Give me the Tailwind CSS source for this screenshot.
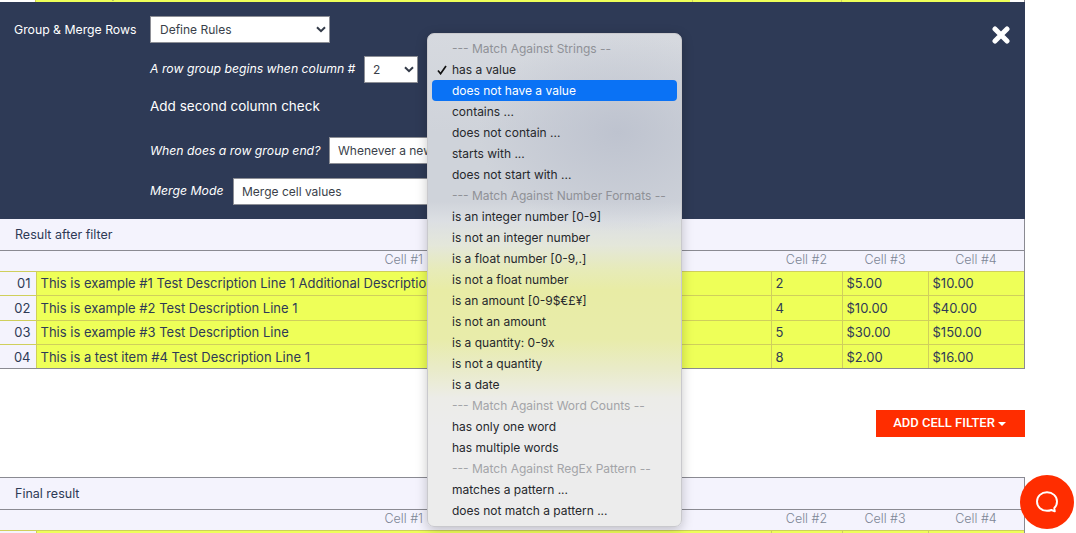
<!DOCTYPE html>
<html lang="en">
<head>
<meta charset="utf-8">
<title>Group & Merge Rows</title>
<script src="https://cdn.jsdelivr.net/npm/@tailwindcss/browser@4"></script>
</head>
<body class="h-[533px] overflow-hidden bg-white font-['Inter',sans-serif] text-[13px] text-[#2e3a56]">
<div class="relative h-[533px] overflow-hidden">
  <main class="w-[1025px]">
    <!-- table row scrolled almost out of view -->
    <div class="flex h-[2px] items-end overflow-hidden border-r border-[#8a8a92] leading-[18px]">
      <div class="w-[36px] shrink-0 border-r border-[#cfcf5c] pl-[17px]">00</div>
      <div class="flex h-[2px] w-[974px] items-end bg-[#eeff58] pl-[6px]">
        <span class="w-[650px]">Test Description Line 1</span>
        <span class="h-full w-[150px] border-x border-[#cfcf5c]"></span>
      </div>
    </div>

    <!-- dark panel -->
    <section class="relative h-[217px] bg-[#2e3a56] pl-[14px] text-white">
      <div class="flex h-[41px] items-end">
        <span class="w-[136px] pb-[4px] text-[12.25px]">Group &amp; Merge Rows</span>
        <div class="relative w-[180px]">
          <select class="h-[27px] w-full appearance-none border border-[#8d8f96] bg-white pl-[9px] text-[12px] text-[#3a3f4a]"><option>Define Rules</option></select>
          <svg class="absolute right-[4px] top-[10px]" width="10" height="7" viewBox="0 0 10 7" fill="none" stroke="#333a48" stroke-width="2"><path d="M1 1.2l4 4 4-4"/></svg>
        </div>
      </div>
      <div class="ml-[136px] mt-[13px] flex h-[27px] items-center">
        <em class="w-[214px] whitespace-nowrap text-[12.25px]">A row group begins when column #</em>
        <div class="relative w-[54px]">
          <select class="h-[27px] w-full appearance-none border border-[#8d8f96] bg-white pl-[8px] text-[12px] text-[#3a3f4a]"><option>2</option></select>
          <svg class="absolute right-[4px] top-[10px]" width="10" height="7" viewBox="0 0 10 7" fill="none" stroke="#333a48" stroke-width="2"><path d="M1 1.2l4 4 4-4"/></svg>
        </div>
      </div>
      <div class="ml-[136px] mt-[13px] h-[20px] text-[13.5px] leading-[20px]">Add second column check</div>
      <div class="ml-[136px] mt-[21px] flex h-[27px] items-center">
        <em class="w-[179px] whitespace-nowrap pt-[1px] text-[12.25px]">When does a row group end?</em>
        <select class="h-[27px] w-[300px] appearance-none border border-[#8d8f96] bg-white pl-[8px] text-[12px] text-[#3a3f4a]"><option>Whenever a new</option></select>
      </div>
      <div class="ml-[136px] mt-[14px] flex h-[27px] items-center">
        <em class="w-[83px] whitespace-nowrap pb-[1px] text-[12.25px]">Merge Mode</em>
        <select class="h-[27px] w-[300px] appearance-none border border-[#8d8f96] bg-white pl-[8px] text-[12px] text-[#3a3f4a]"><option>Merge cell values</option></select>
      </div>
      <svg class="absolute left-[992px] top-[24px]" width="18" height="18" viewBox="0 0 18 18" fill="none" stroke="#fff" stroke-width="5" stroke-linecap="round" aria-label="Close"><path d="M3 3l12 12M15 3L3 15"/></svg>
    </section>

    <!-- result after filter -->
    <section class="border-b border-r border-[#8a8a92] bg-[#f4f3fd]">
      <div class="flex h-[32px] items-center border-b border-[#8a8a92] pl-[15px] pt-[1px] text-[12.5px]">Result after filter</div>
      <table class="w-[1024px] table-fixed border-collapse">
        <colgroup><col class="w-[36px]"><col class="w-[735px]"><col class="w-[71px]"><col class="w-[86px]"><col class="w-[96px]"></colgroup>
        <thead class="text-[12.5px] text-[#7d8696]">
          <tr class="h-[20px]"><th></th><th class="pr-[348px] text-right font-light">Cell #1</th><th class="font-light">Cell #2</th><th class="font-light">Cell #3</th><th class="font-light">Cell #4</th></tr>
        </thead>
        <tbody class="[&_td]:pt-[2px]">
          <tr class="h-[24px] border-t border-[#cfcf5c]"><td class="pr-[5px] text-right">01</td><td class="border-l border-[#cfcf5c] bg-[#eeff58] pl-[4px]">This is example #1 Test Description Line 1 Additional Descriptio</td><td class="border-l border-[#cfcf5c] bg-[#eeff58] pl-[4px]">2</td><td class="border-l border-[#cfcf5c] bg-[#eeff58] pl-[4px]">$5.00</td><td class="border-l border-[#cfcf5c] bg-[#eeff58] pl-[4px]">$10.00</td></tr>
          <tr class="h-[25px] border-t border-[#cfcf5c]"><td class="pr-[5px] text-right">02</td><td class="border-l border-[#cfcf5c] bg-[#eeff58] pl-[4px]">This is example #2 Test Description Line 1</td><td class="border-l border-[#cfcf5c] bg-[#eeff58] pl-[4px]">4</td><td class="border-l border-[#cfcf5c] bg-[#eeff58] pl-[4px]">$10.00</td><td class="border-l border-[#cfcf5c] bg-[#eeff58] pl-[4px]">$40.00</td></tr>
          <tr class="h-[24px] border-t border-[#cfcf5c]"><td class="pr-[5px] text-right">03</td><td class="border-l border-[#cfcf5c] bg-[#eeff58] pl-[4px]">This is example #3 Test Description Line</td><td class="border-l border-[#cfcf5c] bg-[#eeff58] pl-[4px]">5</td><td class="border-l border-[#cfcf5c] bg-[#eeff58] pl-[4px]">$30.00</td><td class="border-l border-[#cfcf5c] bg-[#eeff58] pl-[4px]">$150.00</td></tr>
          <tr class="h-[24px] border-t border-[#cfcf5c]"><td class="pr-[5px] text-right">04</td><td class="border-l border-[#cfcf5c] bg-[#eeff58] pl-[4px]">This is a test item #4 Test Description Line 1</td><td class="border-l border-[#cfcf5c] bg-[#eeff58] pl-[4px]">8</td><td class="border-l border-[#cfcf5c] bg-[#eeff58] pl-[4px]">$2.00</td><td class="border-l border-[#cfcf5c] bg-[#eeff58] pl-[4px]">$16.00</td></tr>
        </tbody>
      </table>
    </section>

    <div class="mt-[41px] flex justify-end">
      <button class="flex h-[27px] w-[149px] items-center justify-center gap-[3px] bg-[#ff2d00] pb-[1px] pr-[2px] font-['Roboto',sans-serif] text-[13px] font-medium text-white">ADD CELL FILTER <span class="mt-[1px] border-x-[4px] border-t-[4px] border-x-transparent border-t-white"></span></button>
    </div>

    <!-- final result -->
    <section class="mt-[40px] border-r border-t border-[#8a8a92] bg-[#f4f3fd]">
      <div class="flex h-[32px] items-center border-b border-[#8a8a92] pl-[15px] pt-[1px] text-[12.5px]">Final result</div>
      <table class="w-[1024px] table-fixed border-collapse">
        <colgroup><col class="w-[36px]"><col class="w-[735px]"><col class="w-[71px]"><col class="w-[86px]"><col class="w-[96px]"></colgroup>
        <thead class="text-[12.5px] text-[#7d8696]">
          <tr class="h-[20px]"><th></th><th class="pr-[348px] text-right font-light">Cell #1</th><th class="font-light">Cell #2</th><th class="font-light">Cell #3</th><th class="font-light">Cell #4</th></tr>
        </thead>
        <tbody>
          <tr class="h-[24px] border-t border-[#cfcf5c]"><td></td><td class="border-l border-[#cfcf5c] bg-[#eeff58]"></td><td class="border-l border-[#cfcf5c] bg-[#eeff58]"></td><td class="border-l border-[#cfcf5c] bg-[#eeff58]"></td><td class="border-l border-[#cfcf5c] bg-[#eeff58]"></td></tr>
        </tbody>
      </table>
    </section>
  </main>

  <!-- native select popup -->
  <ul class="absolute left-[427px] top-[33px] h-[494px] w-[255px] rounded-[7px] border border-[#c9c9cd] bg-[radial-gradient(ellipse_140px_100px_at_75%_20%,#bec3cf_0%,rgba(190,195,207,0)_100%),linear-gradient(180deg,#d6d9df_0%,#cfd3da_20%,#cfd3da_34%,#dcdfe3_38%,#e4e7da_43%,#e7ebb8_48%,#e8eca5_52%,#e8ecaa_62%,#e9ebc8_68%,#ebecd8_71%,#ecece8_74%,#ececec_80%,#ececec_100%)] px-[4px] py-[4px] text-[12px] leading-[21px] text-[#26282c] shadow-[0_3px_12px_rgba(0,0,0,0.22)]">
    <li class="pl-[20px] text-[#8f9197]">--- Match Against Strings --</li>
    <li class="relative pl-[20px]"><svg class="absolute left-[5px] top-[6px]" width="10" height="10" viewBox="0 0 10 10" fill="none" stroke="#111" stroke-width="1.7"><path d="M1 5.5l2.6 3.2L9 1"/></svg>has a value</li>
    <li class="rounded-[4px] bg-[#0a72f5] pl-[20px] text-white">does not have a value</li>
    <li class="pl-[20px]">contains ...</li>
    <li class="pl-[20px]">does not contain ...</li>
    <li class="pl-[20px]">starts with ...</li>
    <li class="pl-[20px]">does not start with ...</li>
    <li class="pl-[20px] text-[#8f9197]">--- Match Against Number Formats --</li>
    <li class="pl-[20px]">is an integer number [0-9]</li>
    <li class="pl-[20px]">is not an integer number</li>
    <li class="pl-[20px]">is a float number [0-9,.]</li>
    <li class="pl-[20px]">is not a float number</li>
    <li class="pl-[20px]">is an amount [0-9$€£¥]</li>
    <li class="pl-[20px]">is not an amount</li>
    <li class="pl-[20px]">is a quantity: 0-9x</li>
    <li class="pl-[20px]">is not a quantity</li>
    <li class="pl-[20px]">is a date</li>
    <li class="pl-[20px] text-[#a3a4a8]">--- Match Against Word Counts --</li>
    <li class="pl-[20px]">has only one word</li>
    <li class="pl-[20px]">has multiple words</li>
    <li class="pl-[20px] text-[#a3a4a8]">--- Match Against RegEx Pattern --</li>
    <li class="pl-[20px]">matches a pattern ...</li>
    <li class="pl-[20px]">does not match a pattern ...</li>
  </ul>

  <!-- chat bubble -->
  <div class="absolute left-[1020px] top-[475px] flex h-[54px] w-[54px] items-center justify-center rounded-full bg-[#ff2d00]">
    <svg width="24" height="24" viewBox="0 0 24 24" fill="none" stroke="#fff" stroke-width="1.9" stroke-linejoin="round"><path d="M12 2.2c5.600 0 10 4 10 9.300 0 2.600-1 4.900-2.700 6.500l.5 3.400-3.400-1.400c-1.300.5-2.800.8-4.400.8-5.600 0-10-3.900-10-9.300 0-5.300 4.400-9.300 10-9.300z"/></svg>
  </div>
</div>
</body>
</html>
